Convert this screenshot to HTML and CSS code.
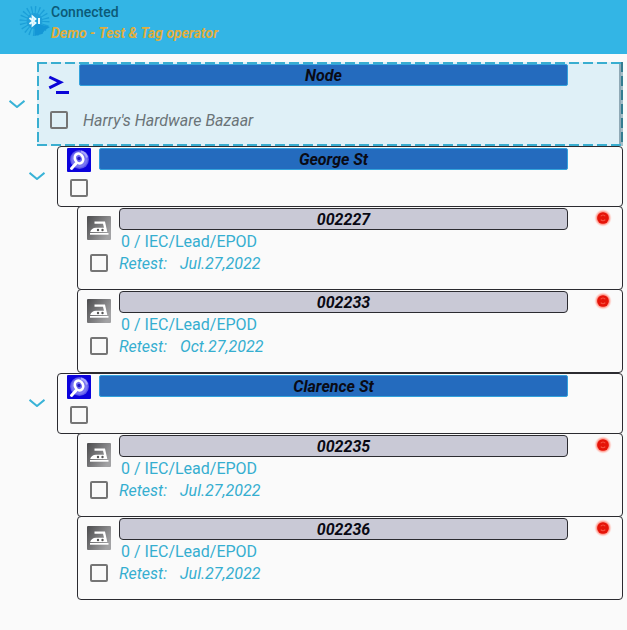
FILE: index.html
```html
<!DOCTYPE html>
<html lang="en">
<head>
<meta charset="utf-8">
<meta name="viewport" content="width=device-width, initial-scale=1">
<title>Demo - Test &amp; Tag operator</title>
<link rel="stylesheet" href="styles.css">
</head>
<body>
<svg class="defs" aria-hidden="true">
  <defs>
    <linearGradient id="steel" x1="0" y1="0" x2="1" y2="0.6"><stop offset="0" stop-color="#4b4b4d"/><stop offset="1" stop-color="#a2a2a4"/></linearGradient>
    <radialGradient id="orb"><stop offset="0" stop-color="#6a64ee"/><stop offset="0.75" stop-color="#7b78f2"/><stop offset="1" stop-color="#4a43e8"/></radialGradient>
    <radialGradient id="glow"><stop offset="0.5" stop-color="#ff6a5a"/><stop offset="0.75" stop-color="#ffb0a6"/><stop offset="1" stop-color="#ffe8e4" stop-opacity="0"/></radialGradient>
    <symbol id="chevron" viewBox="0 0 16 8"><path d="M0.500 0.800L8 7l7.500-6.200" fill="none" stroke="#39b3d7" stroke-width="2"/></symbol>
    <symbol id="site" viewBox="0 0 24 24">
      <rect width="24" height="24" rx="1" fill="#0b02dc"/>
      <circle cx="12.500" cy="11.500" r="9.500" fill="url(#orb)"/>
      <path d="M14 3.500a8 8 0 0 1 6 6" fill="none" stroke="#aaa8fa" stroke-width="2"/>
      <ellipse cx="12" cy="10.500" rx="4" ry="5" transform="rotate(-25 12 10.500)" fill="none" stroke="#fff" stroke-width="2.600"/>
      <circle cx="12" cy="10.500" r="1.700" fill="#2018c0"/>
      <path d="M9 15.500l-4.500 5" stroke="#fff" stroke-width="3" stroke-linecap="round"/>
    </symbol>
    <symbol id="iron" viewBox="0 0 24 24">
      <rect width="24" height="24" rx="1" fill="url(#steel)"/>
      <path fill="#fff" d="M7.500 5.500H18l2.300 10.500H3.200c.6-2.700 2.800-4.300 5.800-4.300h8L16 7.700H7.500z"/>
      <path fill="#fff" d="M3 17h18.500v1.700H3z"/>
      <circle cx="11" cy="14" r="1.200" fill="#555"/><circle cx="15.500" cy="14" r="1.200" fill="#555"/>
    </symbol>
    <symbol id="led" viewBox="0 0 16 16">
      <circle cx="8" cy="8" r="8" fill="url(#glow)"/>
      <circle cx="8" cy="8" r="5.200" fill="#e51408"/>
      <path d="M6 6.500c1-1.500 3-1.500 4 0M6 9.500c1 1.200 3 1.200 4 0" fill="none" stroke="#f65040" stroke-width="1"/>
    </symbol>
    <symbol id="prompt" viewBox="0 0 24 24"><path d="M2.300 4L13.500 9.300 2.300 14.800" fill="none" stroke="#0b05d8" stroke-width="3"/><path d="M9 19.500h13" stroke="#0b05d8" stroke-width="3"/></symbol>
  </defs>
</svg>

<header class="topbar">
  <svg class="logo" viewBox="0 0 32 32" aria-hidden="true">
    <circle cx="15.500" cy="16" r="11" fill="none" stroke="#1b9fd8" stroke-width="8" stroke-dasharray="1.200 2.256"/>
    <circle cx="15.500" cy="16" r="8" fill="#1f9fd9"/>
    <path d="M15.500 18l15.500 4-5 3-3 4-7.500 2z" fill="#1496d6"/>
    <path d="M10.500 13l6 5-3 2.500v-9l3 2.500-6 5" fill="none" stroke="#e8faff" stroke-width="1.800"/>
    <path d="M20 13v6" stroke="#e8faff" stroke-width="2"/>
  </svg>
  <div>
    <p class="status">Connected</p>
    <h1 class="operator">Demo - Test &amp; Tag operator</h1>
  </div>
</header>

<main>
<ul class="tree">
  <li>
    <div class="row">
      <button class="toggle" aria-label="Toggle Node"><svg><use href="#chevron"/></svg></button>
      <article class="card root">
        <div class="side"><svg class="icon"><use href="#prompt"/></svg><input type="checkbox" id="n0"></div>
        <div class="body"><h2 class="title">Node</h2><label class="place" for="n0">Harry's Hardware Bazaar</label></div>
      </article>
    </div>
    <ul>
      <li class="group">
        <div class="row">
          <button class="toggle" aria-label="Toggle George St"><svg><use href="#chevron"/></svg></button>
          <article class="card site">
            <div class="side"><svg class="icon"><use href="#site"/></svg><input type="checkbox" id="n1"></div>
            <div class="body"><h2 class="title"><label for="n1">George St</label></h2></div>
          </article>
        </div>
        <ul>
          <li class="row leaf">
            <article class="card item">
              <div class="side"><svg class="icon"><use href="#iron"/></svg><input type="checkbox" id="a1"></div>
              <div class="body"><h3 class="title"><label for="a1">002227</label></h3><p class="kind">0 / IEC/Lead/EPOD</p><p class="retest"><span>Retest:</span><time>Jul.27,2022</time></p></div>
              <svg class="led"><use href="#led"/></svg>
            </article>
          </li>
          <li class="row leaf">
            <article class="card item">
              <div class="side"><svg class="icon"><use href="#iron"/></svg><input type="checkbox" id="a2"></div>
              <div class="body"><h3 class="title"><label for="a2">002233</label></h3><p class="kind">0 / IEC/Lead/EPOD</p><p class="retest"><span>Retest:</span><time>Oct.27,2022</time></p></div>
              <svg class="led"><use href="#led"/></svg>
            </article>
          </li>
        </ul>
      </li>
      <li class="group">
        <div class="row">
          <button class="toggle" aria-label="Toggle Clarence St"><svg><use href="#chevron"/></svg></button>
          <article class="card site">
            <div class="side"><svg class="icon"><use href="#site"/></svg><input type="checkbox" id="n2"></div>
            <div class="body"><h2 class="title"><label for="n2">Clarence St</label></h2></div>
          </article>
        </div>
        <ul>
          <li class="row leaf">
            <article class="card item">
              <div class="side"><svg class="icon"><use href="#iron"/></svg><input type="checkbox" id="b1"></div>
              <div class="body"><h3 class="title"><label for="b1">002235</label></h3><p class="kind">0 / IEC/Lead/EPOD</p><p class="retest"><span>Retest:</span><time>Jul.27,2022</time></p></div>
              <svg class="led"><use href="#led"/></svg>
            </article>
          </li>
          <li class="row leaf">
            <article class="card item">
              <div class="side"><svg class="icon"><use href="#iron"/></svg><input type="checkbox" id="b2"></div>
              <div class="body"><h3 class="title"><label for="b2">002236</label></h3><p class="kind">0 / IEC/Lead/EPOD</p><p class="retest"><span>Retest:</span><time>Jul.27,2022</time></p></div>
              <svg class="led"><use href="#led"/></svg>
            </article>
          </li>
        </ul>
      </li>
    </ul>
  </li>
</ul>
</main>
</body>
</html>
```

FILE: styles.css
```css
* { box-sizing: border-box; }

body {
  margin: 0;
  background: #fafafa;
  font: 16px/22px Roboto, "Liberation Sans", sans-serif;
}

h1, h2, h3, p, ul { margin: 0; padding: 0; }
ul { list-style: none; }
svg { display: block; }
.defs { position: absolute; width: 0; height: 0; }

.topbar {
  display: flex;
  min-height: 54px;
  padding: 2px 0 0 19px;
  background: #33b5e5;
}
.logo { width: 32px; height: 38px; flex: none; }
.status { font-size: 14px; font-weight: 500; line-height: 21px; color: #0b5a78; }
.operator { font-size: 14px; font-weight: 700; font-style: italic; line-height: 21px; color: #e0ae3e; }

.tree { padding: 8px 4px 8px 0; }
.tree ul { padding-left: 20px; }
.group { padding-bottom: 1px; }

.row { display: flex; align-items: center; }
.leaf { padding-left: 37px; }

.toggle {
  flex: none;
  width: 37px;
  height: 32px;
  padding: 0 12px 0 9px;
  border: 0;
  background: none;
}
.toggle svg { width: 16px; height: 8px; }

.card {
  flex: 1;
  display: flex;
  position: relative;
  padding: 1px 54px 0 0;
  border: 1px solid #2b2b30;
  border-radius: 4px;
  background: #fafafa;
}
.side {
  flex: none;
  width: 41px;
  display: flex;
  flex-direction: column;
  padding-left: 9px;
}
.icon { width: 24px; height: 24px; }
.body { flex: 1; min-width: 0; }

input[type="checkbox"] {
  appearance: none;
  width: 18px;
  height: 18px;
  margin: 0 0 0 3px;
  border: 2px solid #757575;
  border-radius: 2px;
}

.title {
  height: 22px;
  border: 1px solid #33a2dc;
  border-radius: 2px;
  background: #246bbe;
  color: #0a0a14;
  font-size: 16px;
  font-weight: 700;
  font-style: italic;
  line-height: 22px;
  text-align: center;
}

.root {
  min-height: 84px;
  border-color: transparent;
  border-radius: 0;
  background:
    repeating-linear-gradient(90deg, #39aed0 0 10px, transparent 10px 14px) 0 0 / 100% 2px no-repeat border-box,
    repeating-linear-gradient(90deg, #39aed0 0 10px, transparent 10px 14px) 0 100% / 100% 2px no-repeat border-box,
    repeating-linear-gradient(180deg, #39aed0 0 10px, transparent 10px 14px) 0 0 / 2px 100% no-repeat border-box,
    repeating-linear-gradient(180deg, #347d91 0 10px, #a3bcc7 10px 14px) 100% 0 / 2px 100% no-repeat border-box,
    linear-gradient(#8fa9b6, #8fa9b6) 100% 0 / 3px 100% no-repeat padding-box,
    #dff0f7;
}
.root .side { padding-top: 9px; gap: 14px; }
.place {
  display: block;
  padding: 24px 0 0 4px;
  color: #6b7478;
  font-style: italic;
}

.site { min-height: 61px; margin-bottom: -1px; }
.site .side { gap: 7px; }

.item { min-height: 84px; margin-bottom: -1px; }
.item .side { padding-top: 8px; gap: 14px; }
.item .title {
  border-color: #2b2b30;
  border-radius: 4px;
  background: #c9c9d6;
}
.kind, .retest { color: #35aed0; }
.kind { padding: 1px 0 0 2px; }
.retest { display: flex; gap: 13px; font-style: italic; }

.led {
  position: absolute;
  top: 2px;
  right: 10px;
  width: 18px;
  height: 18px;
}
```
